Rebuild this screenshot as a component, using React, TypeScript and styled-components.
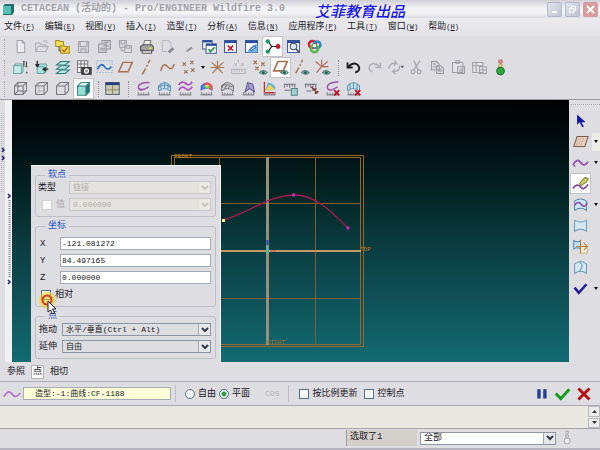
import React from "react";
import styled, { createGlobalStyle } from "styled-components";

const mono = '"Liberation Mono", "Noto Sans CJK SC", monospace';

const GlobalStyle = createGlobalStyle`
  * { box-sizing: border-box; }
  body {
    margin: 0;
    background: #dedde2;
    color: #17171c;
    font-family: ${mono};
    font-size: 9px;
    line-height: 12px;
  }
  button, input, select { font: inherit; color: inherit; margin: 0; }
  svg { display: block; }
`;

const Page = styled.div`
  min-height: 100vh;
  display: flex;
  flex-direction: column;
  overflow: hidden;
`;

const TitleBar = styled.header`
  height: 18px;
  display: flex;
  align-items: center;
  padding: 0 2px 0 3px;
  background: linear-gradient(#d0cfd6 0, #dddce2 3px, #f3f3f6 8px, #f4f4f7 13px, #dcdce2 18px);
`;

const Title = styled.h1`
  margin: 0 0 0 7px;
  font-size: 10px;
  line-height: 18px;
  font-weight: 700;
  color: #a3a3a9;
  white-space: pre;
`;

const Brand = styled.span`
  align-self: flex-start;
  margin-left: 30px;
  font-family: "Noto Sans CJK SC", sans-serif;
  font-size: 15px;
  line-height: 22px;
  font-weight: 500;
  font-style: italic;
  color: #1717e8;
  white-space: nowrap;
`;

const WindowButtons = styled.div`
  margin-left: auto;
  display: flex;
  gap: 3px;
`;

const WindowButton = styled.button<{ $close?: boolean }>`
  width: 15px;
  height: 15px;
  padding: 0;
  display: grid;
  place-items: center;
  border: 1px solid ${(p) => (p.$close ? "#cfa0a2" : "#b3b8c8")};
  border-radius: 2px;
  background: ${(p) => (p.$close ? "#d99c9d" : "linear-gradient(135deg, #e2e5ee, #bfc4d2)")};
`;

const MenuBar = styled.nav`
  height: 18px;
  display: flex;
  align-items: center;
  gap: 10px;
  padding: 0 4px;
  background: linear-gradient(#ececf0, #e2e1e6);
`;

const MenuButton = styled.button`
  padding: 0;
  border: 0;
  background: none;
  white-space: nowrap;
  line-height: 18px;
`;

const Key = styled.span`
  font-size: 7px;
  u { text-underline-offset: 1px; }
`;

const Toolbars = styled.div`
  display: flex;
  flex-direction: column;
  border-bottom: 1px solid #9b9aa0;
`;

const Toolbar = styled.div`
  height: 21px;
  display: flex;
  align-items: center;
  padding-left: 4px;
`;

const Grip = styled.span`
  width: 6px;
  height: 16px;
  border-left: 1px dotted #a9a8b0;
`;

const Divider = styled.span<{ $w: number }>`
  width: ${(p) => p.$w}px;
  height: 16px;
  display: flex;
  justify-content: center;
  &::before {
    content: "";
    border-left: 1px dotted #96959d;
  }
`;

const ToolButton = styled.button<{ $active?: boolean }>`
  width: 21px;
  height: 21px;
  flex: none;
  padding: 0;
  display: grid;
  place-items: center;
  border: 1px solid ${(p) => (p.$active ? "#c4c3ca" : "transparent")};
  background: ${(p) => (p.$active ? "#fdfdfd" : "none")};
`;

const DropButton = styled.button<{ $lit?: boolean }>`
  width: 8px;
  height: 18px;
  flex: none;
  padding: 0;
  display: grid;
  place-items: center;
  border: 0;
  background: ${(p) => (p.$lit ? "#eeeee8" : "none")};
`;

const Work = styled.main`
  flex: 1;
  display: flex;
  min-height: 262px;
`;

const LeftRail = styled.div`
  width: 12px;
  flex: none;
  background: linear-gradient(90deg, #dedde2 5px, #f1f1f4 5px);
`;

const Canvas = styled.section`
  position: relative;
  flex: 1;
  background: linear-gradient(#000202 0, #010c0e 15%, #03201f 32%, #0b3d41 56%, #0f5359 78%, #126b71 100%);
`;

const Drawing = styled.svg`
  position: absolute;
  inset: 0;
  width: 100%;
  height: 100%;
`;

const RightRail = styled.aside`
  width: 31px;
  flex: none;
  padding-top: 4px;
  background: #dedde2;
  &::before {
    content: "";
    display: block;
    height: 5px;
    margin-left: 2px;
    border-top: 1px dotted #a9a8b0;
  }
`;

const RailRow = styled.div`
  display: flex;
  align-items: center;
  height: 21px;
  padding-left: 1px;
  gap: 1px;
`;

const Panel = styled.form`
  position: absolute;
  left: 19px;
  top: 65px;
  bottom: 0;
  width: 190px;
  display: flex;
  flex-direction: column;
  gap: 3px;
  padding: 3px 4px 0;
  background: #dedde2;
  border-top: 1px solid #f2f2f5;
  border-right: 1px solid #f2f2f5;
`;

const Group = styled.fieldset<{ $top?: number }>`
  min-width: 0;
  margin: 0;
  padding: ${(p) => p.$top || 0}px 4px 5px 2px;
  border: 1px solid #bfbec6;
  border-radius: 3px;
`;

const Legend = styled.legend`
  margin-left: 7px;
  padding: 0 3px;
  line-height: 12px;
  color: #1c4fc4;
`;

const Rows = styled.div`
  display: flex;
  flex-direction: column;
  gap: 4px;
`;

const Row = styled.label<{ $indent?: number; $dim?: boolean }>`
  height: 13px;
  display: flex;
  align-items: center;
  gap: 4px;
  padding-left: ${(p) => p.$indent || 0}px;
  color: ${(p) => (p.$dim ? "#a9a8a8" : "inherit")};
  white-space: nowrap;
`;

const Caption = styled.span<{ $w: number }>`
  width: ${(p) => p.$w}px;
  flex: none;
`;

const Coordinate = styled.input`
  flex: 1;
  min-width: 0;
  height: 13px;
  padding: 0 1px;
  border: 1px solid #a5acb6;
  background: #fff;
  font-size: 8px;
`;

const SelectBox = styled.span<{ $white?: boolean; $off?: boolean }>`
  flex: 1;
  min-width: 0;
  height: 13px;
  display: grid;
  grid-template-columns: 1fr 12px;
  grid-template-rows: 100%;
  align-items: center;
  border: 1px solid ${(p) => (p.$off ? "#c9c8c6" : "#8e96a4")};
  background: ${(p) => (p.$white ? "#fff" : p.$off ? "#e4e3df" : "#dedde2")};
`;

const Select = styled.select`
  grid-area: 1 / 1 / 2 / 3;
  width: 100%;
  height: 100%;
  padding: 0 14px 0 3px;
  appearance: none;
  border: 0;
  background: none;
  font-size: 8px;
  line-height: 11px;
  &:disabled { color: #b1b0ab; opacity: 1; }
`;

const ArrowCell = styled.span<{ $off?: boolean }>`
  grid-area: 1 / 2 / 2 / 3;
  height: 100%;
  display: grid;
  place-items: center;
  pointer-events: none;
  color: ${(p) => (p.$off ? "#c2c1bb" : "#333a48")};
  background: ${(p) => (p.$off ? "#eae9e4" : "#e8e8ec")};
  border-left: 1px solid ${(p) => (p.$off ? "#dedcd6" : "#a3aab8")};
`;

const Check = styled.input`
  appearance: none;
  width: 10px;
  height: 10px;
  flex: none;
  border: 1px solid #4d7296;
  background: #fafafa;
  &:disabled { border-color: #d3d2ce; }
`;

const Radio = styled.input`
  appearance: none;
  width: 10px;
  height: 10px;
  flex: none;
  border: 1px solid #4b7393;
  border-radius: 50%;
  background: #f6f6f6;
  &:checked { background: radial-gradient(circle, #2da342 2px, #f3f6f3 3px); }
`;

const Pointer = styled.svg`
  position: absolute;
  left: 7px;
  top: 125px;
  pointer-events: none;
`;

const TabBar = styled.div`
  height: 20px;
  display: flex;
  align-items: center;
  gap: 5px;
  padding-left: 6px;
  border-bottom: 1px solid #adacb4;
`;

const Tab = styled.button<{ $active?: boolean }>`
  height: 14px;
  padding: 0 1px;
  line-height: 12px;
  border: 1px solid ${(p) => (p.$active ? "#b3b2ba" : "transparent")};
  border-width: 1px ${(p) => (p.$active ? 1 : 0)}px;
  background: ${(p) => (p.$active ? "#fafafa" : "none")};
`;

const Dashboard = styled.div`
  height: 24px;
  display: flex;
  align-items: center;
  padding: 0 6px 0 3px;
  border-bottom: 1px solid #adacb4;
`;

const Feature = styled.output`
  width: 148px;
  height: 13px;
  margin-left: 2px;
  padding-left: 11px;
  font-size: 8px;
  line-height: 11px;
  border: 1px solid #a5aeb0;
  background: #fdfed9;
  white-space: nowrap;
`;

const Line = styled.span`
  width: 1px;
  height: 17px;
  background: #c0bfc7;
`;

const Choices = styled.div<{ $left: number; $gap: number }>`
  display: flex;
  align-items: center;
  gap: ${(p) => p.$gap}px;
  margin-left: ${(p) => p.$left}px;
`;

const Choice = styled.label`
  display: flex;
  align-items: center;
  gap: 3px;
  white-space: nowrap;
`;

const Cos = styled.button`
  padding: 0;
  margin: 0 9px 0 15px;
  border: 0;
  background: none;
  font-size: 8px;
  &:disabled { color: #b4b3b9; }
`;

const Actions = styled.div`
  margin-left: auto;
  display: flex;
`;

const Messages = styled.div`
  height: 23px;
  display: flex;
  justify-content: flex-end;
  background: #e9e9e2;
  border-bottom: 1px solid #a4a3aa;
`;

const Scroll = styled.div`
  width: 12px;
  display: grid;
  grid-template-rows: 1fr 1fr;
  gap: 1px;
`;

const ScrollButton = styled.button`
  padding: 0;
  display: grid;
  place-items: center;
  border: 1px solid #b9b9c0;
  background: #ebebee;
`;

const StatusBar = styled.footer`
  height: 21px;
  display: flex;
  align-items: stretch;
  padding: 1px 0 2px;
  border-bottom: 2px solid #b4b3bb;
`;

const Selected = styled.span`
  width: 71px;
  margin-left: auto;
  padding-left: 3px;
  border-left: 1px solid #9e9da4;
  background: #d3cfca;
  line-height: 14px;
`;

const Filter = styled.div`
  width: 136px;
  margin-left: 3px;
  display: flex;
  align-items: center;
  select { font-size: 9px; }
`;

const Light = styled.span`
  width: 44px;
  padding-left: 3px;
  display: flex;
  align-items: center;
`;

const Ico = ({ children, size = 19 }: { children: React.ReactNode; size?: number }) => (
  <svg width={size} height={size} viewBox="0 0 20 20" fill="none" stroke="#777780" strokeWidth="1.2" aria-hidden="true">
    {children}
  </svg>
);

const DownMark = () => (
  <svg width="4" height="3" viewBox="0 0 4 3" aria-hidden="true"><path d="M0 0h4L2 3z" fill="#111" /></svg>
);

const Chevron = () => (
  <svg width="8" height="6" viewBox="0 0 8 6" fill="none" stroke="currentColor" strokeWidth="2" aria-hidden="true">
    <path d="M1 1l3 3 3-3" />
  </svg>
);

const Eye = () => (
  <g>
    <path d="M10 16q4-5 9 0q-4 4-9 0z" fill="#8fb7ab" stroke="#4f7f76" />
    <circle cx="14.5" cy="16" r="1.7" fill="#1f5a50" stroke="none" />
  </g>
);

const Comb = () => <path d="M3 17.5h14M4 14v4M7 15v3M10 15v3M13 15v3M16 14v4" stroke="#85858e" />;
const Cross = () => <path d="M12 12l6 6M18 12l-6 6" stroke="#c3122a" strokeWidth="2.2" />;
const Win = () => (
  <g>
    <path d="M3 3h14v14H3z" fill="#f7f9ff" stroke="#3c5c9c" />
    <path d="M3 4.5h14" stroke="#2d4d9c" strokeWidth="3" />
  </g>
);
const Cube = ({ fill = "none" }: { fill?: string }) => (
  <path d="M3 7h10v10H3zM3 7l4-4h10v10l-4 4M13 7l4-4" fill={fill} stroke="#77777c" />
);

const icons: Record<string, React.ReactNode> = {
  new: <path d="M6 3h6l3 3v11H6zM12 3v3h3" fill="#ececf0" stroke="#a3a3aa" />,
  open: <path d="M3 16V6h5l1 2h6v3M3 16l3-6h12l-3 6zM12 4q4-2 5 2" stroke="#aeaeb5" />,
  working: (
    <g>
      <path d="M2 3h4l1 1h4v6H2z" fill="#f5e35d" stroke="#a48a22" />
      <path d="M6 10v5h3" stroke="#555" />
      <path d="M8 9h4l1 1h5v8H8z" fill="#f3d746" stroke="#a48a22" />
      <path d="M10 14l2 2 4-5" stroke="#b75b21" strokeWidth="1.6" />
    </g>
  ),
  save: <path d="M4 4h12v13H4zM6 4v6h8V4M7 17v-4h6v4" stroke="#a2a2a9" fill="#d4d4d9" />,
  saveAs: <path d="M3 7h9v10H3zM5 12h6M5 14h6M7 7V3h10v10h-5M9 5h6M9 9h6" stroke="#96969d" fill="#d3d3d8" />,
  copySave: <path d="M3 3h8v8H3zM5 3v4h4V3M9 9h8v8H9zM11 9v3h4V9M5 11v4h3" stroke="#a0a0a7" fill="#dcdce1" />,
  print: (
    <g>
      <path d="M6 9l2-6h7l-1 6" fill="#f2f2f2" stroke="#777" />
      <path d="M3 10l3-2h10l2 2v5H3z" fill="#a2a2a2" stroke="#535359" />
      <path d="M5 15h11v3H5z" fill="#efefdf" stroke="#555" />
      <path d="M13 12h3" stroke="#e7d93a" strokeWidth="2" />
    </g>
  ),
  pageSend: <g><path d="M4 3h7l3 3v5M4 3v13h5" stroke="#b9b9c0" /><path d="M10 16l6-5 2 2-5 5z" fill="#85858c" stroke="none" /></g>,
  pen: <path d="M6 16l7-6 2 2-5 4z" fill="#9999a0" stroke="none" />,
  winCheck: (
    <g>
      <path d="M2 3h11v10H2z" fill="#fff" stroke="#3c5c9c" />
      <path d="M2 4h11" stroke="#2d4d9c" strokeWidth="2.5" />
      <path d="M6 7h12v11H6z" fill="#fff" stroke="#3c5c9c" />
      <path d="M6 8h12" stroke="#2d4d9c" strokeWidth="2.5" />
      <path d="M9 13l2 3 5-5" stroke="#239b3b" strokeWidth="2" />
    </g>
  ),
  winClose: <g><Win /><path d="M7 9l6 6M13 9l-6 6" stroke="#c4182b" strokeWidth="2" /></g>,
  winEdit: <g><Win /><path d="M5 17q3-8 12-10v10z" fill="#78b7e8" stroke="none" /><path d="M8 14l6-5 1 2-5 4z" fill="#e2f3ff" stroke="#3d6da8" /></g>,
  tree: (
    <g>
      <path d="M5 4l4 6-4 6M9 10h8" stroke="#222" strokeWidth="1.4" />
      <circle cx="4.5" cy="4" r="2.6" fill="#1d9e67" stroke="none" />
      <circle cx="4.5" cy="16" r="2.6" fill="#1d9e67" stroke="none" />
      <circle cx="16.5" cy="10" r="2.8" fill="#c3122a" stroke="none" />
    </g>
  ),
  winFind: <g><Win /><circle cx="10" cy="10" r="3.8" fill="#dbe9f8" stroke="#444b60" /><path d="M13 13l4 4" stroke="#444b60" strokeWidth="2" /></g>,
  colors: (
    <g strokeWidth="3">
      <circle cx="7.5" cy="7.5" r="4" stroke="#ce2432" />
      <circle cx="13" cy="8" r="4" stroke="#2e88bc" />
      <circle cx="10" cy="12.5" r="4.2" stroke="#5db350" />
      <circle cx="10" cy="9" r="2" fill="#fff" stroke="none" />
    </g>
  ),
  redraw: <g><path d="M2 8h9v9H2zM2 8l2-2h9v9l-2 2" fill="#c7ece8" stroke="#6fa3a8" /><path d="M14 3v6M17 3v6M13 3h2M16 9h2M17 15l1 2" stroke="#444" strokeWidth="1.3" /></g>,
  orient: <g><path d="M5 9h8v8H5zM5 9l3-3h8v8l-3 3" fill="#aee2dc" stroke="#6fa3a3" /><path d="M5 2v6M3 6l2 3 2-3M18 12h-5M15 10l-3 2 3 2" stroke="#222" strokeWidth="1.5" /></g>,
  layers: <g fill="#bdeae6" stroke="#287879"><path d="M3 17l5-4h10l-5 4z" /><path d="M3 12l5-4h10l-5 4z" /><path d="M3 7l5-4h10l-5 4z" /></g>,
  viewMgr: <g><path d="M3 2h12v14H3zM3 6h12M3 10h12M7 2v14M11 2v14" fill="#f6f6f6" stroke="#77777f" /><path d="M8 10h11v8H8z" fill="#444" stroke="#333" /><circle cx="13.5" cy="14" r="2.4" fill="#999" stroke="#fff" /></g>,
  sketch: <g><path d="M1 2h18v14H1z" stroke="#9cb6da" strokeDasharray="2 1.5" /><path d="M2 12Q6 3 10 9t8 0" stroke="#266bbc" strokeWidth="2" /></g>,
  plane: <path d="M2 15L7 4h11l-5 11z" stroke="#a8704f" strokeWidth="1.7" />,
  axis: <path d="M5 18l4-7M10 9l1-2M12 5l2-4" stroke="#a8704f" strokeWidth="1.8" />,
  curve: <path d="M2 14Q5 3 10 9t8-3" stroke="#a8704f" strokeWidth="1.7" />,
  points: <path d="M3 4l4 4M7 4l-4 4M12 2l4 4M16 2l-4 4M5 13l4 4M9 13l-4 4M13 11l4 4M17 11l-4 4" stroke="#96735f" strokeWidth="1.3" />,
  csys: <path d="M10 10V2M10 10l7-6M10 10h8M10 10l-6 7M10 10l6 7M10 10L3 4M10 10H2" stroke="#aa7b5d" strokeWidth="1.4" />,
  ruler: <path d="M2 12h16v5H2zM5 12v3M8 12v3M11 12v3M14 12v3M5 5l3 3M8 5l-3 3M13 5l3 3M16 5l-3 3M10 1v3" stroke="#b5b5bb" />,
  pointsEye: <g><path d="M3 2l4 4M7 2L3 6M12 4l4 4M16 4l-4 4M5 9l4 4M9 9l-4 4" stroke="#a8704f" strokeWidth="1.4" /><Eye /></g>,
  planeEye: <g><path d="M2 14L7 3h11l-5 11z" stroke="#a8704f" strokeWidth="1.9" /><Eye /></g>,
  axisEye: <g><path d="M3 17l4-7M8 8l1-2M10 4l1-3" stroke="#a8704f" strokeWidth="1.7" /><Eye /></g>,
  csysEye: <g><path d="M9 9V1M9 9l7-6M9 9h8M9 9l-6 7M9 9L2 3" stroke="#b06d5a" strokeWidth="1.4" /><Eye /></g>,
  undo: <path d="M3 4v6h6M4 9q6-6 11-2q5 6-3 9" stroke="#1b1b20" strokeWidth="2.2" />,
  redo: <path d="M17 4v6h-6M16 9q-6-6-11-2q-4 6 3 8" stroke="#b1b1b8" strokeWidth="1.8" />,
  regen: <g><path d="M2 11q2-7 9-6l-2-3M11 5L8 8M15 8q0 7-8 7l3 3M7 15l2-3" stroke="#a9a9b0" strokeWidth="1.6" /><path d="M16 8h4l-2 3z" fill="#55555c" stroke="none" /></g>,
  cut: <g stroke="#a3a3aa" strokeWidth="1.4"><path d="M7 2l5 11M14 2L7 13" /><circle cx="6" cy="15" r="2.2" /><circle cx="13" cy="15" r="2.2" /></g>,
  copy: <path d="M3 3h6l3 3v7H3zM5 6h3M5 9h5M9 8h5l3 3v6H9zM11 12h4M11 14h5" fill="#d9d9de" stroke="#97979e" />,
  paste: <path d="M3 4h12v12H3zM7 2h4v3H7zM9 9h8v8H9zM11 12h4M11 14h4" fill="#e4e4e8" stroke="#9b9ba2" />,
  pasteSp: <path d="M2 4h12v12H2zM2 8h12M6 4v12M10 9h8v8h-8zM14 9v8M10 13h8" fill="#e4e4e8" stroke="#a0a0a7" />,
  signal: (
    <g>
      <circle cx="10" cy="3" r="2.2" fill="#d9a19c" stroke="#b57069" />
      <circle cx="10" cy="8" r="2" fill="#f0df8b" stroke="#b3a053" />
      <circle cx="10" cy="14" r="4.4" fill="#2fa942" stroke="#166a26" />
    </g>
  ),
  wire: <g><Cube /><path d="M7 3v10h10M7 13l-4 4" stroke="#77777c" /></g>,
  hidden: <g><Cube /><path d="M7 3v10h10M7 13l-4 4" stroke="#b5b5ba" /></g>,
  noHidden: <Cube />,
  shaded: <g stroke="#3d8c87"><path d="M3 7h10v11H3z" fill="#98dfd6" /><path d="M3 7l4-4h10l-4 4z" fill="#dffaf6" /><path d="M13 7l4-4v11l-4 4z" fill="#24706c" /></g>,
  window: <g><path d="M2 3h16v14H2z" fill="#cdcbb4" stroke="#53657d" /><path d="M2 4.5h16" stroke="#233e7d" strokeWidth="3" /><path d="M10 6v11M2 11.500h16" stroke="#8c8b71" /></g>,
  combCurve: <g><path d="M17 3Q3 3 4 9t12-1Q8 13 6 10" stroke="#a152b5" strokeWidth="1.8" /><Comb /></g>,
  combSurf: <g><path d="M3 13V7q7-8 14 0v6q-7-6-14 0M6 5v7M10 3v7M14 5v7M3 9q7-7 14 0" fill="#cbe2f2" stroke="#5f91b6" /><Comb /></g>,
  combWave: <g><path d="M2 6q4-6 8-2t8-2M2 12q4-6 8-2t8-2" stroke="#a64dbd" strokeWidth="1.9" /><Comb /></g>,
  rainbow: <g stroke="none"><path d="M3 13V7q7-8 14 0v6q-7-6-14 0z" fill="#4d6ee8" /><path d="M7 4q6-3 10 3v5l-5-2z" fill="#ef4f57" /><path d="M6 8q4-4 9 0l-3 3z" fill="#55ca64" /><path d="M8 6h5l-2 3z" fill="#f2df44" /><Comb /></g>,
  zebra: <g><path d="M3 13V7q7-8 14 0v6q-7-6-14 0" fill="#d1d1d4" /><path d="M7 11q0-6 6-5M11 10q1-4 5-2M4 9q0-4 5-4" stroke="#77777c" /><Comb /></g>,
  draft: <g><path d="M6 14L9 3l6 2 2 9-6-4-5 4z" fill="#a8a3d2" stroke="#5c579b" /><path d="M9 3l2 7" /><Comb /></g>,
  slope: <g><path d="M4 2v13h13" stroke="#c92636" strokeWidth="1.5" /><path d="M5 13L8 3q9 1 9 8z" fill="#5fb1e0" stroke="none" /><path d="M5 13L10 5l6 6z" fill="#f3d64c" stroke="none" /><Comb /></g>,
  measure: <g><path d="M2 5h14M3 5v4M6 5v3M9 5v4M12 5v3M15 5v4M3 12h7" stroke="#71717a" /><path d="M11 10h7v8h-7z" fill="#a6d0ce" stroke="#4f8582" /></g>,
  measure2: <g><path d="M2 5h14M3 5v4M6 5v3M9 5v4M12 5v3M15 5v4M4 13h6" stroke="#71717a" /><path d="M10 8l7 8M11 12l5-2M14 16l4-3" stroke="#77333a" strokeWidth="1.7" /></g>,
  delCurve: <g><path d="M17 2Q3 3 4 9t12-1" stroke="#a152b5" strokeWidth="1.7" /><Comb /><Cross /></g>,
  delSurf: <g><path d="M3 13V7q7-8 14 0v6q-7-6-14 0M6 5v7M10 3v7M14 5v7" fill="#cbe2f2" stroke="#5f91b6" /><Comb /><Cross /></g>,
  arrow: <path d="M6 3v12l3-3 3 6 2-1-3-5h5z" fill="#1515a5" stroke="none" />,
  grid: <g><path d="M2 16L6 4h13l-4 12z" fill="#e8d2bf" stroke="#7c5a49" /><path d="M7 7h9M6 10h9M5 13h9" stroke="#a27c65" strokeDasharray="1 2" /></g>,
  wave: <path d="M1 13Q6 4 10 10t9-1M2 14h2M10 10h2" stroke="#9450b5" strokeWidth="2" />,
  waveEdit: <g><path d="M1 16Q6 9 10 14t9-3" stroke="#8a49aa" strokeWidth="2" /><path d="M9 10l6-7 4 1-2 4-7 5z" fill="#d9d05c" stroke="#74813d" /></g>,
  surfWave: <g><path d="M3 17V6q7-5 14 0v11q-7-5-14 0z" fill="#cde4f2" stroke="#5a8db1" /><path d="M3 11q4-6 8-1t7-2" stroke="#8a49aa" strokeWidth="1.8" /></g>,
  surf: <path d="M3 17V4q7 4 14 0v13q-7-5-14 0z" fill="#d3e8f4" stroke="#6d99b6" />,
  surfJoin: <g><path d="M2 3q5 3 8 0v10q-4-3-8 0z" fill="#bfdef2" stroke="#5a8db1" /><path d="M10 10h8v8h-8z" fill="#f0ead2" stroke="#c5ba8e" /><path d="M5 10h13M14 6l4 4-4 4M10 2v16" stroke="#ba7d33" /></g>,
  surfTrim: <g><path d="M3 17V6q7-6 14 0v11q-7-5-14 0z" fill="#d3e8f4" stroke="#6d99b6" /><path d="M9 4q6 3 0 10" stroke="#5a8db1" /></g>,
  done: <path d="M3 9l5 6 9-10" stroke="#20209b" strokeWidth="3" />,
  pink: <path d="M1 13Q6 4 10 10t9-1" stroke="#b26bc9" strokeWidth="1.8" />,
  pause: <path d="M7 5v11M14 5v11" stroke="#233c99" strokeWidth="4" />,
  accept: <path d="M2 10l6 6L18 5" stroke="#149a1c" strokeWidth="3.400" />,
  reject: <path d="M4 4l13 13M17 4L4 17" stroke="#b90d14" strokeWidth="3.400" />,
};

const activeTools = new Set(["tree", "planeEye", "shaded", "waveEdit"]);

const toolRows: string[][] = [
  ["new", "open", "working", "save", "saveAs", "copySave", "print", "pageSend", "pen", "winCheck", "winClose", "winEdit", "tree", "winFind", "colors"],
  ["redraw", "orient", "layers", "viewMgr", "sketch", "plane", "axis", "curve", "points", "drop", "csys", "ruler", "pointsEye", "planeEye", "axisEye", "csysEye", "sep10", "undo", "redo", "regen", "cut", "copy", "paste", "pasteSp", "signal"],
  ["wire", "hidden", "noHidden", "shaded", "sep8", "window", "sep10", "combCurve", "combSurf", "combWave", "rainbow", "zebra", "draft", "slope", "measure", "measure2", "delCurve", "delSurf"],
];

const railTools = [
  { id: "arrow" },
  { id: "grid", drop: true, lit: true },
  { id: "wave", drop: true },
  { id: "waveEdit" },
  { id: "surfWave", drop: true },
  { id: "surf" },
  { id: "surfJoin" },
  { id: "surfTrim" },
  { id: "done", drop: true },
];

const menus = [
  ["文件", "F"], ["编辑", "E"], ["视图", "V"], ["插入", "I"], ["造型", "T"], ["分析", "A"],
  ["信息", "N"], ["应用程序", "P"], ["工具", "T"], ["窗口", "W"], ["帮助", "H"],
];

const Tool = ({ id }: { id: string }) => {
  if (id === "drop") return <DropButton type="button" aria-label="more"><DownMark /></DropButton>;
  if (id === "sep8") return <Divider $w={8} />;
  if (id === "sep10") return <Divider $w={10} />;
  return (
    <ToolButton type="button" aria-label={id} $active={activeTools.has(id)}>
      <Ico size={17}>{icons[id]}</Ico>
    </ToolButton>
  );
};

const Picker = ({ value, label, off, white }: { value: string; label?: string; off?: boolean; white?: boolean }) => (
  <SelectBox $off={off} $white={white}>
    <Select disabled={off} aria-label={label} defaultValue={value}><option>{value}</option></Select>
    <ArrowCell $off={off}><Chevron /></ArrowCell>
  </SelectBox>
);

const Scene = () => (
  <Drawing viewBox="12 100 557 262" preserveAspectRatio="xMinYMin meet" fill="none">
    <g stroke="#96662a">
      <path d="M171.500 155.500H363.500V346.500H171.500z" />
      <path d="M174.500 157.500H360.500V344.500H174.500z" />
      <path d="M219.500 158V345M315.500 158V345M175 203.500H361M175 298.500H361" stroke="#7d6030" />
    </g>
    <path d="M175 251H361" stroke="#c09a68" strokeWidth="2" />
    <path d="M267 157V345" stroke="#8f9183" strokeWidth="2" />
    <path d="M268.500 157V345" stroke="#a58a6c" />
    <path d="M223 220C246 214 268 196 293 195C315 194 333 213 348 228" stroke="#a01c50" strokeWidth="1.400" />
    <path d="M222 219h3v3h-3z" fill="#f4f39a" />
    <path d="M292 193.500h3v3h-3zM346.500 226.500h3v3h-3z" fill="#b332b0" />
    <path d="M267.500 240v5" stroke="#2440b8" strokeWidth="2" />
    <path d="M267.500 246v7" stroke="#4fb3a9" strokeWidth="3" />
    <path d="M270 251h6" stroke="#d26d54" strokeWidth="1.500" />
    <g fill="#c57a1f" fontFamily="Liberation Mono, monospace" fontSize="6">
      <text x="174" y="158">FRONT</text>
      <text x="360" y="251">TOP</text>
      <text x="267" y="344" fill="#99702c">RIGHT</text>
    </g>
  </Drawing>
);

export default function App() {
  return (
    <Page>
      <GlobalStyle />
      <TitleBar>
        <svg width="11" height="12" viewBox="0 0 11 12" aria-hidden="true">
          <path d="M0 3l2-2h9v8l-2 3H0z" fill="#1f6f6d" />
          <path d="M0 3h8v8H0z" fill="#58bfb4" />
        </svg>
        <Title>CETACEAN (活动的) - Pro/ENGINEER Wildfire 3.0</Title>
        <Brand>艾菲教育出品</Brand>
        <WindowButtons>
          <WindowButton aria-label="minimize">
            <svg width="9" height="9"><path d="M2 7h5" stroke="#fff" strokeWidth="2" /></svg>
          </WindowButton>
          <WindowButton aria-label="restore">
            <svg width="9" height="9" fill="none" stroke="#fff"><path d="M1.500 3.500h4v4h-4zM3.500 3V1.500h4v4H6" /></svg>
          </WindowButton>
          <WindowButton aria-label="close" $close>
            <svg width="9" height="9"><path d="M1 1l7 7M8 1L1 8" stroke="#fff" strokeWidth="2" /></svg>
          </WindowButton>
        </WindowButtons>
      </TitleBar>
      <MenuBar>
        {menus.map(([name, key]) => (
          <MenuButton key={name}>{name}<Key>(<u>{key}</u>)</Key></MenuButton>
        ))}
      </MenuBar>
      <Toolbars>
        {toolRows.map((row, i) => (
          <Toolbar key={i}>
            <Grip />
            {row.map((id, n) => <Tool key={n} id={id} />)}
          </Toolbar>
        ))}
      </Toolbars>
      <Work>
        <LeftRail>
          <svg width="12" height="262" fill="none" aria-hidden="true">
            <path d="M1.500 13V92M3.500 13V92" stroke="#bab9c1" strokeDasharray="1 1" />
            <path d="M9.500 100V178" stroke="#7f8091" strokeWidth="2" strokeDasharray="1 1" />
            <path d="M2 48l2 2-2 2M2 56l2 2-2 2M8 94l2 2-2 2M8 180l2 2-2 2" stroke="#20207d" strokeWidth="1.500" />
          </svg>
        </LeftRail>
        <Canvas>
          <Scene />
          <Panel>
            <Group>
              <Legend>软点</Legend>
              <Rows>
                <Row><Caption $w={27}>类型</Caption><Picker value="链接" off /></Row>
                <Row $indent={4} $dim>
                  <Check type="checkbox" disabled aria-label="值" /><Caption $w={9}>值</Caption>
                  <Picker value="0.000000" label="值" off />
                </Row>
              </Rows>
            </Group>
            <Group $top={5}>
              <Legend>坐标</Legend>
              <Rows>
                {[["X", "-121.081272"], ["Y", "84.497165"], ["Z", "0.000000"]].map(([axis, value]) => (
                  <Row key={axis} $indent={2}>
                    <Caption $w={16}>{axis}</Caption><Coordinate defaultValue={value} />
                  </Row>
                ))}
                <Row $indent={3}><Check type="checkbox" />相对</Row>
              </Rows>
            </Group>
            <Group $top={1}>
              <Legend>点</Legend>
              <Rows>
                <Row $indent={1}><Caption $w={19}>拖动</Caption><Picker value="水平/垂直(Ctrl + Alt)" /></Row>
                <Row $indent={1}><Caption $w={19}>延伸</Caption><Picker value="自由" /></Row>
              </Rows>
            </Group>
            <Pointer width="20" height="24" fill="none" aria-hidden="true">
              <circle cx="9" cy="9" r="8.500" fill="#f3d51e" fillOpacity="0.55" />
              <circle cx="9" cy="9" r="4.500" stroke="#e0391d" strokeWidth="2" />
              <path d="M10 10v11l2.500-2 2 4 2-1-2-4h3.500z" fill="#fff" stroke="#222" />
            </Pointer>
          </Panel>
        </Canvas>
        <RightRail>
          {railTools.map((t) => (
            <RailRow key={t.id}>
              <Tool id={t.id} />
              {t.drop && <DropButton aria-label="more" $lit={t.lit}><DownMark /></DropButton>}
            </RailRow>
          ))}
        </RightRail>
      </Work>
      <TabBar>
        <Tab>参照</Tab>
        <Tab $active>点</Tab>
        <Tab>相切</Tab>
      </TabBar>
      <Dashboard>
        <Ico size={18}>{icons.pink}</Ico>
        <Feature>造型:-1:曲线:CF-1188</Feature>
        <Choices $left={4} $gap={0}><Line /></Choices>
        <Choices $left={9} $gap={3}>
          <Choice><Radio type="radio" name="kind" />自由</Choice>
          <Choice><Radio type="radio" name="kind" defaultChecked />平面</Choice>
        </Choices>
        <Cos disabled>COS</Cos>
        <Line />
        <Choices $left={10} $gap={7}>
          <Choice><Check type="checkbox" />按比例更新</Choice>
          <Choice><Check type="checkbox" />控制点</Choice>
        </Choices>
        <Actions>
          {["pause", "accept", "reject"].map((id) => <Tool key={id} id={id} />)}
        </Actions>
      </Dashboard>
      <Messages>
        <Scroll>
          <ScrollButton aria-label="scroll up"><svg width="5" height="3"><path d="M0 3h5L2.500 0z" fill="#333" /></svg></ScrollButton>
          <ScrollButton aria-label="scroll down"><svg width="5" height="3"><path d="M0 0h5L2.500 3z" fill="#333" /></svg></ScrollButton>
        </Scroll>
      </Messages>
      <StatusBar>
        <Selected>选取了1</Selected>
        <Filter><Picker value="全部" label="过滤器" white /></Filter>
        <Light>
          <svg width="14" height="16" fill="none" stroke="#a8a8af" aria-hidden="true">
            <circle cx="8" cy="2.500" r="1.500" /><circle cx="8" cy="6" r="1.500" /><circle cx="8" cy="11" r="3" fill="#ececef" />
          </svg>
        </Light>
      </StatusBar>
    </Page>
  );
}
